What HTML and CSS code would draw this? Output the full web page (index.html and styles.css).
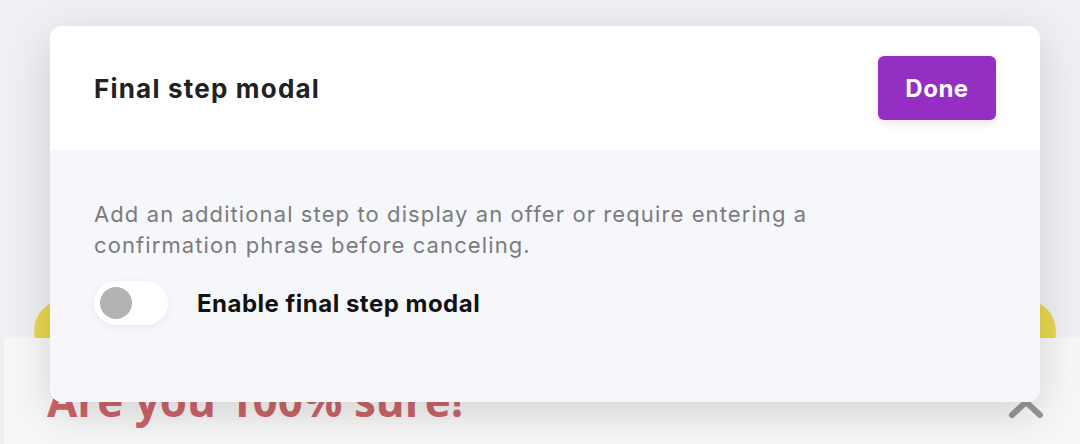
FILE: index.html
```html
<!DOCTYPE html>
<html>
<head>
<meta charset="utf-8">
<link rel="stylesheet" href="styles.css">
</head>
<body>
<div class="page">
  <div class="top-area"></div>
  <div class="band">
    <span class="dot dot-left"></span>
    <span class="dot dot-right"></span>
  </div>
  <div class="preview">
    <h2 class="preview-title">Are you 100% sure!</h2>
    <svg class="chevron" width="36" height="26" viewBox="0 0 36 26"><path d="M4 21 L18 8 L32 21" fill="none" stroke="#979797" stroke-width="6" stroke-linecap="round" stroke-linejoin="round"/></svg>
  </div>
</div>
<div class="modal">
  <div class="modal-header">
    <h1 class="modal-title">Final step modal</h1>
    <button class="btn-done">Done</button>
  </div>
  <div class="modal-body">
    <p class="desc">Add an additional step to display an offer or require entering a confirmation phrase before canceling.</p>
    <label class="toggle-row">
      <span class="toggle"><span class="knob"></span></span>
      <span class="toggle-label">Enable final step modal</span>
    </label>
  </div>
</div>
</body>
</html>
```
FILE: styles.css
```css
* { box-sizing: border-box; }
html, body { margin: 0; padding: 0; }
body {
  width: 1080px;
  height: 444px;
  overflow: hidden;
  background: #eff0f4;
  font-family: Inter, "Noto Sans", sans-serif;
  position: relative;
}
.page { display: flex; flex-direction: column; height: 444px; }
.top-area { height: 252px; }
.band {
  height: 86px;
  background: #eef0f4;
  position: relative;
}
.dot {
  position: absolute;
  top: 48px;
  width: 62px;
  height: 62px;
  border-radius: 50%;
  background: #e8d74f;
}
.dot-left { left: 34px; }
.dot-right { left: 994px; }
.preview {
  flex: 1;
  margin-left: 4px;
  background: #f7f7f7;
  position: relative;
  padding: 35px 0 0 43px;
}
.preview-title {
  margin: 0;
  font-family: "Open Sans", sans-serif;
  font-weight: 700;
  font-size: 44px;
  line-height: 54px;
  color: #cd6469;
}
.chevron { position: absolute; left: 1004px; top: 56px; }
.modal {
  position: absolute;
  left: 50px;
  top: 26px;
  width: 990px;
  height: 376px;
  border-radius: 12px;
  overflow: hidden;
  background: #f6f7fb;
  box-shadow: 0 12px 44px rgba(0, 0, 0, 0.15);
  display: flex;
  flex-direction: column;
}
.modal-header {
  height: 124px;
  background: #fff;
  display: flex;
  align-items: center;
  justify-content: space-between;
  padding: 0 44px;
}
.modal-title {
  margin: 0;
  font-size: 26px;
  letter-spacing: 1.2px;
  font-weight: 700;
  color: #222;
}
.btn-done {
  width: 118px;
  height: 64px;
  border: 0;
  border-radius: 6px;
  background: #952fc3;
  color: #fff;
  font-family: Inter, sans-serif;
  font-weight: 700;
  font-size: 24px;
  letter-spacing: 0.5px;
  box-shadow: 0 3px 10px rgba(0, 0, 0, 0.1);
}
.modal-body { padding: 49px 44px 0; }
.desc {
  margin: 0;
  font-size: 22px;
  letter-spacing: 1.1px;
  line-height: 31px;
  color: #7b7b7d;
  max-width: 740px;
}
.toggle-row {
  display: flex;
  align-items: center;
  gap: 29px;
  margin-top: 20px;
}
.toggle {
  width: 74px;
  height: 44px;
  border-radius: 22px;
  background: #fff;
  box-shadow: 0 2px 8px rgba(0, 0, 0, 0.06);
  display: flex;
  align-items: center;
  padding-left: 6px;
}
.knob {
  width: 32px;
  height: 32px;
  border-radius: 50%;
  background: #b3b3b3;
}
.toggle-label {
  font-size: 24px;
  letter-spacing: 0.5px;
  font-weight: 700;
  color: #111;
}
```
